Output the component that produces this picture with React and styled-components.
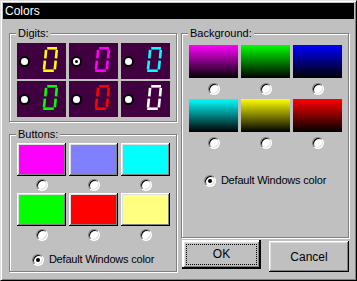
import styled, { createGlobalStyle } from "styled-components";

const GlobalStyle = createGlobalStyle`
  html, body {
    margin: 0;
    padding: 0;
    background: #c0c0c0;
  }
  body {
    font-family: "Liberation Sans", Arial, sans-serif;
    font-size: 11px;
    color: #000;
  }
`;

const Window = styled.div`
  width: 357px;
  height: 281px;
  box-sizing: border-box;
  background: #c0c0c0;
  border: 1px solid;
  border-color: #dfdfdf #000 #000 #dfdfdf;
  box-shadow: inset 1px 1px #fff, inset -1px -1px #808080;
  padding: 2px;
  display: flex;
  flex-direction: column;
`;

const TitleBar = styled.div`
  height: 16px;
  background: #000;
  color: #fff;
  font-size: 12px;
  line-height: 16px;
  padding-left: 2px;
`;

const Body = styled.div`
  display: grid;
  grid-template-columns: 168px 168px;
  column-gap: 4px;
  padding: 8px 0 0 6px;
`;

const Column = styled.div`
  display: flex;
  flex-direction: column;
`;

const Group = styled.fieldset`
  margin: ${p => p.$mt || 0}px 0 0 0;
  padding: ${p => p.$pt}px 0 ${p => p.$pb}px 7px;
  border: 1px solid #808080;
  box-shadow: inset 1px 1px #fff, 1px 1px #fff;
  min-width: 0;
`;

const Legend = styled.legend`
  margin-left: -1px;
  padding: 0 2px;
  line-height: 13px;
  font-size: 11px;
  background: #c0c0c0;
`;

const Grid = styled.div`
  display: grid;
  grid-template-columns: repeat(3, 49px);
  column-gap: 3px;
  row-gap: ${p => p.$rowGap}px;
`;

const DigitCell = styled.div`
  height: 36px;
  background: #400040;
  display: flex;
  align-items: center;
  padding-left: 2px;
`;

const CellRadio = styled.span`
  width: 7px;
  height: 7px;
  border-radius: 50%;
  background: #fff;
  border: 2px solid #000;
  display: flex;
  align-items: center;
  justify-content: center;
  flex: none;
  &::after {
    content: "";
    width: 3px;
    height: 3px;
    border-radius: 50%;
    background: ${p => (p.$checked ? "#000" : "transparent")};
  }
`;

const DigitSvg = styled.svg`
  margin-left: 12px;
  margin-top: -4px;
  flex: none;
`;

const SwatchCell = styled.div`
  display: flex;
  flex-direction: column;
  align-items: center;
  gap: ${p => p.$gap}px;
`;

const ButtonSwatch = styled.div`
  width: 49px;
  height: 33px;
  box-sizing: border-box;
  background: ${p => p.color};
  box-shadow: inset -1px -1px #000, inset 1px 1px #fff, inset -2px -2px #808080, inset 2px 2px #dfdfdf;
`;

const GradientSwatch = styled.div`
  width: 49px;
  height: 33px;
  background: linear-gradient(${p => p.color}, #000);
`;

const Radio = styled.span`
  width: 12px;
  height: 12px;
  box-sizing: border-box;
  border-radius: 50%;
  background: #fff;
  border: 1px solid;
  border-color: #808080 #fff #fff #808080;
  box-shadow: inset 1px 1px #000, inset -1px -1px #dfdfdf;
  display: flex;
  align-items: center;
  justify-content: center;
  flex: none;
  &::after {
    content: "";
    width: 4px;
    height: 4px;
    border-radius: 50%;
    background: ${p => (p.$checked ? "#000" : "transparent")};
  }
`;

const DefaultRow = styled.div`
  display: flex;
  align-items: center;
  justify-content: center;
  gap: 5px;
  margin-top: ${p => p.$mt}px;
  padding-right: 7px;
  line-height: 13px;
  letter-spacing: -0.2px;
`;

const ButtonRow = styled.div`
  display: flex;
  justify-content: space-between;
  align-items: flex-start;
  margin-top: 2px;
  padding-left: 1px;
`;

const PushButton = styled.button`
  width: ${p => (p.$default ? 79 : 80)}px;
  height: ${p => (p.$default ? 29 : 31)}px;
  margin-top: ${p => (p.$default ? 0 : 1)}px;
  box-sizing: border-box;
  border: none;
  background: #c0c0c0;
  font-family: "Liberation Sans", Arial, sans-serif;
  font-size: 12px;
  color: #000;
  padding: 0;
  box-shadow: inset -1px -1px #000, inset 1px 1px #fff, inset -2px -2px #808080, inset 2px 2px #dfdfdf;
  ${p =>
    p.$default &&
    `
    box-shadow: inset -2px -2px #000, inset 2px 2px #fff, inset -3px -3px #808080, inset 3px 3px #dfdfdf, inset 0 0 0 1px #000;
  `}
`;

const FocusLabel = styled.span`
  display: block;
  margin: 4px;
  height: 19px;
  line-height: 19px;
  border: 1px dotted #000;
`;

const Digit = ({ color }) => (
  <DigitSvg width="16" height="25" viewBox="0 0 16 25">
    <g stroke={color} strokeWidth="2.6" fill="none">
      <line x1="5.2" y1="1.3" x2="15" y2="1.3" />
      <line x1="14.8" y1="2.8" x2="14" y2="11.3" />
      <line x1="13.7" y1="13.7" x2="12.8" y2="22.4" />
      <line x1="1.2" y1="23.7" x2="11.8" y2="23.7" />
      <line x1="2.9" y1="13.7" x2="2" y2="22.4" />
      <line x1="4.1" y1="2.8" x2="3.3" y2="11.3" />
    </g>
  </DigitSvg>
);

const digitColors = ["#ffff00", "#ff00ff", "#00ffff", "#00ff00", "#ff0000", "#ffffff"];
const buttonColors = ["#ff00ff", "#8080ff", "#00ffff", "#00ff00", "#ff0000", "#ffff80"];
const backgroundColors = ["#ff00ff", "#00ff00", "#0000ff", "#00ffff", "#ffff00", "#ff0000"];

const App = () => {
  return (
    <>
      <GlobalStyle />
      <Window>
        <TitleBar>Colors</TitleBar>
        <Body>
          <Column>
            <Group $pt={3} $pb={4}>
              <Legend>Digits:</Legend>
              <Grid $rowGap={2}>
                {digitColors.map((c, i) => (
                  <DigitCell key={c}>
                    <CellRadio $checked={i === 1} />
                    <Digit color={c} />
                  </DigitCell>
                ))}
              </Grid>
            </Group>
            <Group $mt={6} $pt={2} $pb={5}>
              <Legend>Buttons:</Legend>
              <Grid $rowGap={2}>
                {buttonColors.map(c => (
                  <SwatchCell key={c} $gap={3}>
                    <ButtonSwatch color={c} />
                    <Radio />
                  </SwatchCell>
                ))}
              </Grid>
              <DefaultRow $mt={12}>
                <Radio $checked />
                Default Windows color
              </DefaultRow>
            </Group>
          </Column>
          <Column>
            <Group $pt={5} $pb={50}>
              <Legend>Background:</Legend>
              <Grid $rowGap={4}>
                {backgroundColors.map(c => (
                  <SwatchCell key={c} $gap={5}>
                    <GradientSwatch color={c} />
                    <Radio />
                  </SwatchCell>
                ))}
              </Grid>
              <DefaultRow $mt={25}>
                <Radio $checked />
                Default Windows color
              </DefaultRow>
            </Group>
            <ButtonRow>
              <PushButton $default>
                <FocusLabel>OK</FocusLabel>
              </PushButton>
              <PushButton>Cancel</PushButton>
            </ButtonRow>
          </Column>
        </Body>
      </Window>
    </>
  );
};

export default App;
